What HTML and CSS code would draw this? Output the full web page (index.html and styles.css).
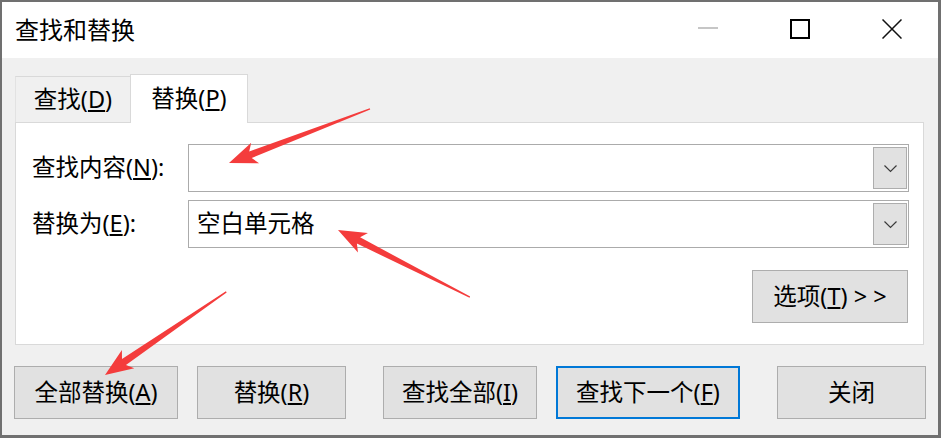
FILE: index.html
```html
<!DOCTYPE html>
<html lang="zh-CN">
<head>
  <meta charset="UTF-8" />
  <meta name="viewport" content="width=device-width, initial-scale=1.0" />
  <title>查找和替换</title>
  <link rel="stylesheet" href="styles.css">
</head>
<body>
  <div class="window">
    <div class="titlebar">
      <span class="title">查找和替换</span>
      <div class="caption-btns">
        <span class="cap">
          <svg width="20" height="20" viewBox="0 0 20 20"><line x1="0" y1="9" x2="20" y2="9" stroke="#c6c6c6" stroke-width="2" /></svg>
        </span>
        <span class="cap">
          <svg width="20" height="20" viewBox="0 0 20 20"><rect x="1" y="1" width="18" height="18" fill="none" stroke="#000" stroke-width="2" /></svg>
        </span>
        <span class="cap">
          <svg width="20" height="20" viewBox="0 0 20 20"><path d="M0.5 0.5 L19.5 19.5 M19.5 0.5 L0.5 19.5" stroke="#111" stroke-width="1.5" /></svg>
        </span>
      </div>
    </div>

    <div class="dialog">
      <div class="tabs">
        <div class="tab">查找(<u>D</u>)</div>
        <div class="tab active">替换(<u>P</u>)</div>
      </div>

      <div class="panel">
        <div class="field-row">
          <span class="field-label">查找内容(<u>N</u>):</span>
          <div class="combo">
            <span class="combo-text"></span>
            <span class="combo-btn">
              <svg width="13" height="8" viewBox="0 0 13 8"><polyline points="0.5,0.5 6.5,6.5 12.5,0.5" fill="none" stroke="#3a3a3a" stroke-width="1.2" /></svg>
            </span>
          </div>
        </div>
        <div class="field-row">
          <span class="field-label">替换为(<u>E</u>):</span>
          <div class="combo">
            <span class="combo-text">空白单元格</span>
            <span class="combo-btn">
              <svg width="13" height="8" viewBox="0 0 13 8"><polyline points="0.5,0.5 6.5,6.5 12.5,0.5" fill="none" stroke="#3a3a3a" stroke-width="1.2" /></svg>
            </span>
          </div>
        </div>
        <div class="options-row">
          <button class="btn btn-options">选项(<u>T</u>) &gt; &gt;</button>
        </div>
      </div>

      <div class="actions">
        <button class="btn btn-all">全部替换(<u>A</u>)</button>
        <button class="btn btn-replace">替换(<u>R</u>)</button>
        <button class="btn btn-findall">查找全部(<u>I</u>)</button>
        <button class="btn btn-next">查找下一个(<u>F</u>)</button>
        <button class="btn btn-close">关闭</button>
      </div>
    </div>
  </div>

  <!-- 标注箭头 -->
  <svg class="annotations" width="941" height="438" viewBox="0 0 941 438">
    <g fill="#f43c3c">
      <polygon transform="translate(229 163) rotate(-21)" points="0,0 28,-11 23,-3.5 151,-0.7 151,0.7 23,3.5 28,11" />
      <polygon transform="translate(338 230) rotate(27)" points="0,0 28,-11 23,-3.5 148,-0.7 148,0.7 23,3.5 28,11" />
      <polygon transform="translate(105 375) rotate(-34.4)" points="0,0 28,-11 23,-3.5 147,-0.7 147,0.7 23,3.5 28,11" />
    </g>
  </svg>
</body>
</html>
```

FILE: styles.css
```css
html, body {
  margin: 0;
  padding: 0;
}

body {
  position: relative;
  width: 941px;
  height: 438px;
  overflow: hidden;
  font-family: "Noto Sans", "Noto Sans CJK SC", sans-serif;
  font-size: 23.5px;
  color: #000;
}

.window {
  box-sizing: border-box;
  width: 941px;
  height: 438px;
  border-style: solid;
  border-color: #707070;
  border-width: 2px 3px 3px 2px;
  display: flex;
  flex-direction: column;
  background: #f0f0f0;
}

/* 标题栏 */
.titlebar {
  height: 56px;
  flex-shrink: 0;
  background: #fff;
  display: flex;
  align-items: center;
}

.title {
  padding-left: 13px;
  font-size: 24px;
  line-height: 1;
  margin-top: -1px;
  flex: 1;
}

.caption-btns {
  display: flex;
  height: 100%;
}

.cap {
  width: 92px;
  display: flex;
  align-items: center;
  justify-content: center;
  padding-bottom: 2px;
}

.cap svg {
  display: block;
}

/* 内容 */
.dialog {
  flex: 1;
  display: flex;
  flex-direction: column;
  padding: 16px 14px 0 13px;
}

.tabs {
  height: 48px;
  display: flex;
  align-items: flex-end;
}

.tab {
  box-sizing: border-box;
  height: 46px;
  width: 115px;
  border-top: 1px solid #d9d9d9;
  border-left: 1px solid #e2e2e2;
  display: flex;
  align-items: center;
  justify-content: center;
  line-height: 1;
}

.tab.active {
  width: 118px;
  height: 49px;
  margin-bottom: -1px;
  background: #fff;
  border: 1px solid #d9d9d9;
  border-bottom: none;
  position: relative;
  z-index: 1;
  padding-bottom: 1px;
}

.panel {
  background: #fff;
  border: 1px solid #d9d9d9;
  padding: 21px 14px 21px 16px;
  display: flex;
  flex-direction: column;
  gap: 8px;
}

.field-row {
  display: flex;
  align-items: center;
  height: 48px;
}

.field-label {
  width: 156px;
  flex-shrink: 0;
  line-height: 1;
}

.combo {
  flex: 1;
  box-sizing: border-box;
  height: 48px;
  border: 1px solid #ababab;
  display: flex;
  align-items: center;
}

.combo-text {
  padding-left: 8px;
  line-height: 1;
  flex: 1;
}

.combo-btn {
  box-sizing: border-box;
  width: 34px;
  height: 42px;
  margin-right: 1px;
  background: #e1e1e1;
  border: 1px solid #adadad;
  display: flex;
  align-items: center;
  justify-content: center;
  padding-top: 2px;
}

.combo-btn svg {
  display: block;
}

.options-row {
  display: flex;
  justify-content: flex-end;
  margin-top: 14px;
}

/* 按钮 */
.btn {
  box-sizing: border-box;
  flex-shrink: 0;
  height: 53px;
  background: #e1e1e1;
  border: 1px solid #adadad;
  font-family: inherit;
  font-size: 23.5px;
  color: #000;
  padding: 0;
  line-height: 1;
  display: flex;
  align-items: center;
  justify-content: center;
}

.btn-options {
  width: 156px;
  margin-right: 1px;
}

.actions {
  display: flex;
  margin-top: 21px;
  margin-left: -1px;
  margin-right: -3px;
}

.btn-all { width: 164px; }
.btn-replace { width: 149px; margin-left: 19px; }
.btn-findall { width: 154px; margin-left: 37px; }
.btn-next {
  width: 184px;
  margin-left: 19px;
  border: 2px solid #0078d7;
}
.btn-close { width: 149px; margin-left: 37px; }

.annotations {
  position: absolute;
  top: 0;
  left: 0;
  pointer-events: none;
}
```
